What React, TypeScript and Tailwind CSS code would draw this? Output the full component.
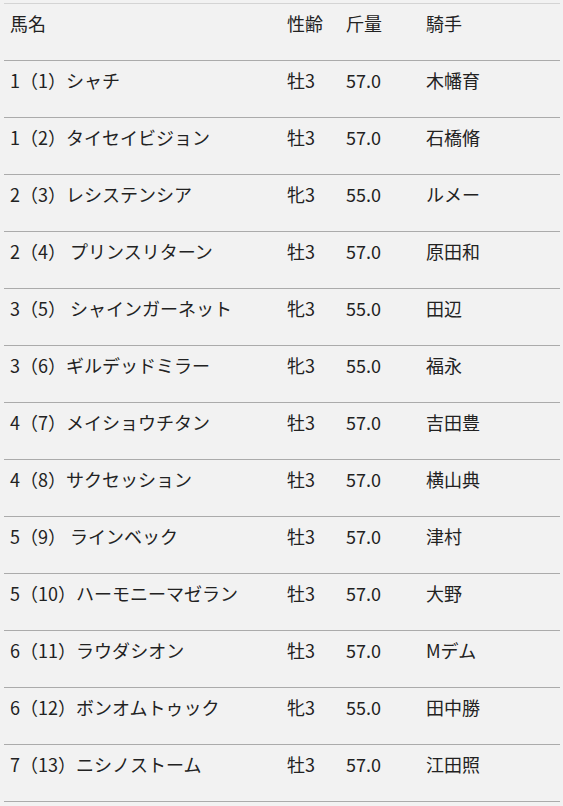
import React from "react";

const rows: [string, string, string, string][] = [
  ["1（1）シャチ", "牡3", "57.0", "木幡育"],
  ["1（2）タイセイビジョン", "牡3", "57.0", "石橋脩"],
  ["2（3）レシステンシア", "牝3", "55.0", "ルメー"],
  ["2（4） プリンスリターン", "牡3", "57.0", "原田和"],
  ["3（5） シャインガーネット", "牝3", "55.0", "田辺"],
  ["3（6）ギルデッドミラー", "牝3", "55.0", "福永"],
  ["4（7）メイショウチタン", "牡3", "57.0", "吉田豊"],
  ["4（8）サクセッション", "牡3", "57.0", "横山典"],
  ["5（9） ラインベック", "牡3", "57.0", "津村"],
  ["5（10）ハーモニーマゼラン", "牡3", "57.0", "大野"],
  ["6（11）ラウダシオン", "牡3", "57.0", "Mデム"],
  ["6（12）ボンオムトゥック", "牝3", "55.0", "田中勝"],
  ["7（13）ニシノストーム", "牡3", "57.0", "江田照"],
];

function Row({ cells, top }: { cells: string[]; top?: boolean }) {
  return (
    <div
      className={
        "grid grid-cols-[277px_59px_80px_1fr] h-[57px] border-t " +
        (top ? "border-[#d4d4d4]" : "border-[#ababab]")
      }
    >
      {cells.map((c, i) => (
        <div key={i} className="pl-[6px] pt-[6px] leading-[27px] whitespace-pre">
          {c}
        </div>
      ))}
    </div>
  );
}

export default function App() {
  return (
    <div
      className="w-[563px] h-[806px] bg-[#f2f2f2] text-[#222222] text-[18px] overflow-hidden pt-[3px]"
      style={{ fontFamily: '"Noto Sans CJK JP", "Noto Sans", sans-serif' }}
    >
      <div className="ml-[4px] w-[556px] border-b border-[#ababab]">
        <Row cells={["馬名", "性齢", "斤量", "騎手"]} top />
        {rows.map((r, i) => (
          <Row key={i} cells={r} />
        ))}
      </div>
    </div>
  );
}
